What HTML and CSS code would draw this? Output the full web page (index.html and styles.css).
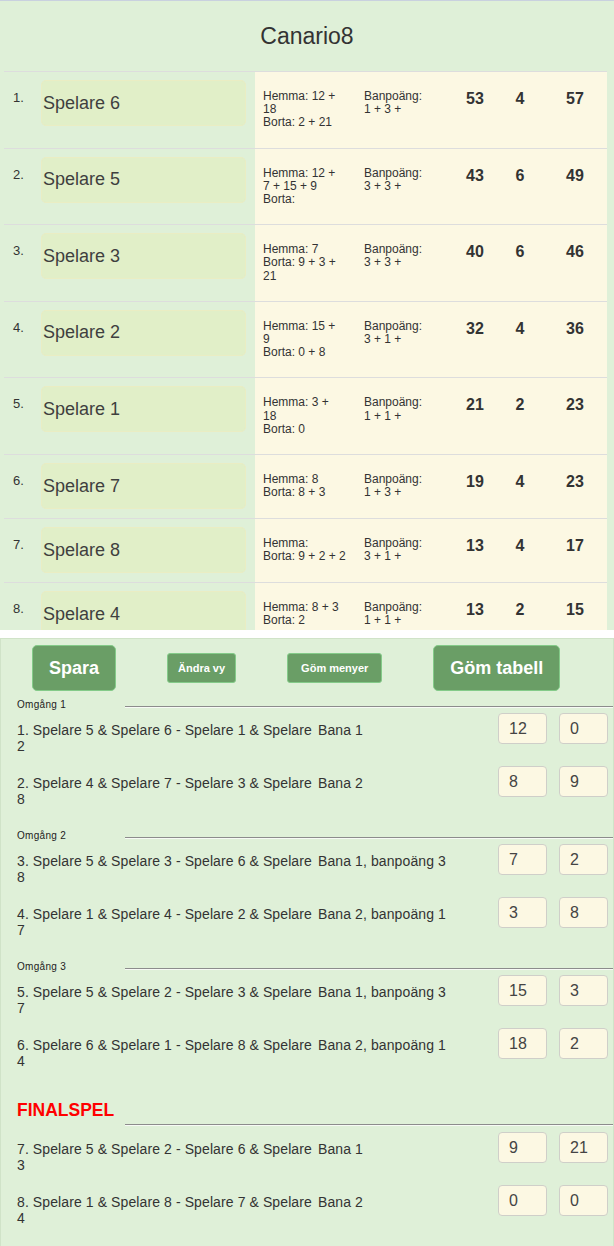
FILE: index.html
```html
<!DOCTYPE html>
<html lang="sv">
<head>
<meta charset="utf-8">
<title>Canario8</title>
<link rel="stylesheet" href="styles.css">
</head>
<body>
<div class="board">
  <h1 class="title">Canario8</h1>
  <div class="standings">
    <div class="row">
      <div class="pos">1.</div>
      <div class="name-cell"><div class="name">Spelare 6</div></div>
      <div class="cell hemma">Hemma: 12 +<br>18<br>Borta: 2 + 21</div>
      <div class="cell ban">Banpoäng:<br>1 + 3 +</div>
      <div class="cell score">53</div>
      <div class="cell score">4</div>
      <div class="cell score total">57</div>
    </div>
    <div class="row">
      <div class="pos">2.</div>
      <div class="name-cell"><div class="name">Spelare 5</div></div>
      <div class="cell hemma">Hemma: 12 +<br>7 + 15 + 9<br>Borta:</div>
      <div class="cell ban">Banpoäng:<br>3 + 3 +</div>
      <div class="cell score">43</div>
      <div class="cell score">6</div>
      <div class="cell score total">49</div>
    </div>
    <div class="row">
      <div class="pos">3.</div>
      <div class="name-cell"><div class="name">Spelare 3</div></div>
      <div class="cell hemma">Hemma: 7<br>Borta: 9 + 3 +<br>21</div>
      <div class="cell ban">Banpoäng:<br>3 + 3 +</div>
      <div class="cell score">40</div>
      <div class="cell score">6</div>
      <div class="cell score total">46</div>
    </div>
    <div class="row">
      <div class="pos">4.</div>
      <div class="name-cell"><div class="name">Spelare 2</div></div>
      <div class="cell hemma">Hemma: 15 +<br>9<br>Borta: 0 + 8</div>
      <div class="cell ban">Banpoäng:<br>3 + 1 +</div>
      <div class="cell score">32</div>
      <div class="cell score">4</div>
      <div class="cell score total">36</div>
    </div>
    <div class="row">
      <div class="pos">5.</div>
      <div class="name-cell"><div class="name">Spelare 1</div></div>
      <div class="cell hemma">Hemma: 3 +<br>18<br>Borta: 0</div>
      <div class="cell ban">Banpoäng:<br>1 + 1 +</div>
      <div class="cell score">21</div>
      <div class="cell score">2</div>
      <div class="cell score total">23</div>
    </div>
    <div class="row">
      <div class="pos">6.</div>
      <div class="name-cell"><div class="name">Spelare 7</div></div>
      <div class="cell hemma">Hemma: 8<br>Borta: 8 + 3</div>
      <div class="cell ban">Banpoäng:<br>1 + 3 +</div>
      <div class="cell score">19</div>
      <div class="cell score">4</div>
      <div class="cell score total">23</div>
    </div>
    <div class="row">
      <div class="pos">7.</div>
      <div class="name-cell"><div class="name">Spelare 8</div></div>
      <div class="cell hemma">Hemma:<br>Borta: 9 + 2 + 2</div>
      <div class="cell ban">Banpoäng:<br>3 + 1 +</div>
      <div class="cell score">13</div>
      <div class="cell score">4</div>
      <div class="cell score total">17</div>
    </div>
    <div class="row">
      <div class="pos">8.</div>
      <div class="name-cell"><div class="name">Spelare 4</div></div>
      <div class="cell hemma">Hemma: 8 + 3<br>Borta: 2</div>
      <div class="cell ban">Banpoäng:<br>1 + 1 +</div>
      <div class="cell score">13</div>
      <div class="cell score">2</div>
      <div class="cell score total">15</div>
    </div>
  </div>
</div>

<div class="panel">
  <div class="toolbar">
    <button class="btn btn-lg">Spara</button>
    <button class="btn btn-sm">Ändra vy</button>
    <button class="btn btn-sm btn-wide">Göm menyer</button>
    <button class="btn btn-lg">Göm tabell</button>
  </div>

  <section class="round">
    <div class="round-head"><span class="round-label">Omgång 1</span><span class="rule"></span></div>
    <div class="match">
      <div class="match-text">1. Spelare 5 &amp; Spelare 6 - Spelare 1 &amp; Spelare 2</div>
      <div class="match-lane">Bana 1</div>
      <input class="score-input" type="text" value="12">
      <input class="score-input" type="text" value="0">
    </div>
    <div class="match">
      <div class="match-text">2. Spelare 4 &amp; Spelare 7 - Spelare 3 &amp; Spelare 8</div>
      <div class="match-lane">Bana 2</div>
      <input class="score-input" type="text" value="8">
      <input class="score-input" type="text" value="9">
    </div>
  </section>

  <section class="round">
    <div class="round-head"><span class="round-label">Omgång 2</span><span class="rule"></span></div>
    <div class="match">
      <div class="match-text">3. Spelare 5 &amp; Spelare 3 - Spelare 6 &amp; Spelare 8</div>
      <div class="match-lane">Bana 1, banpoäng 3</div>
      <input class="score-input" type="text" value="7">
      <input class="score-input" type="text" value="2">
    </div>
    <div class="match">
      <div class="match-text">4. Spelare 1 &amp; Spelare 4 - Spelare 2 &amp; Spelare 7</div>
      <div class="match-lane">Bana 2, banpoäng 1</div>
      <input class="score-input" type="text" value="3">
      <input class="score-input" type="text" value="8">
    </div>
  </section>

  <section class="round">
    <div class="round-head"><span class="round-label">Omgång 3</span><span class="rule"></span></div>
    <div class="match">
      <div class="match-text">5. Spelare 5 &amp; Spelare 2 - Spelare 3 &amp; Spelare 7</div>
      <div class="match-lane">Bana 1, banpoäng 3</div>
      <input class="score-input" type="text" value="15">
      <input class="score-input" type="text" value="3">
    </div>
    <div class="match">
      <div class="match-text">6. Spelare 6 &amp; Spelare 1 - Spelare 8 &amp; Spelare 4</div>
      <div class="match-lane">Bana 2, banpoäng 1</div>
      <input class="score-input" type="text" value="18">
      <input class="score-input" type="text" value="2">
    </div>
  </section>

  <section class="round final">
    <div class="round-head"><span class="round-label final-label">FINALSPEL</span><span class="rule final-rule"></span></div>
    <div class="match">
      <div class="match-text">7. Spelare 5 &amp; Spelare 2 - Spelare 6 &amp; Spelare 3</div>
      <div class="match-lane">Bana 1</div>
      <input class="score-input" type="text" value="9">
      <input class="score-input" type="text" value="21">
    </div>
    <div class="match">
      <div class="match-text">8. Spelare 1 &amp; Spelare 8 - Spelare 7 &amp; Spelare 4</div>
      <div class="match-lane">Bana 2</div>
      <input class="score-input" type="text" value="0">
      <input class="score-input" type="text" value="0">
    </div>
  </section>
</div>
</body>
</html>
```

FILE: styles.css
```css
* {
  box-sizing: border-box;
}

html,
body {
  margin: 0;
  padding: 0;
}

body {
  width: 614px;
  background: #ffffff;
  font-family: "Liberation Sans", Arial, sans-serif;
  color: #333333;
}

/* ---------- standings board ---------- */
.board {
  height: 630px;
  overflow: hidden;
  background: #dff0d8;
  border-top: 1px solid #c9d1df;
}

.title {
  margin: 0;
  height: 70px;
  line-height: 70px;
  text-align: center;
  font-size: 23px;
  font-weight: normal;
  color: #333333;
}

.standings {
  margin: 0 7px 0 4px;
}

.row {
  display: grid;
  grid-template-columns: 37px 214px 101px 89px 60px 30px 72px;
  border-top: 1px solid #dddddd;
}

.pos {
  padding: 18px 0 0 9px;
  font-size: 13px;
  color: #333333;
}

.name-cell {
  padding: 8px 9px 9px 0;
}

.name {
  height: 46px;
  display: flex;
  align-items: center;
  padding-left: 1px;
  background: #e1efc8;
  border: 1px solid #eaedc3;
  border-radius: 5px;
  font-size: 18px;
  color: #3f3f3f;
}

.cell {
  background: #fcf8e3;
  padding-top: 18px;
  padding-bottom: 18px;
}

.hemma,
.ban {
  padding-left: 8px;
  font-size: 12px;
  line-height: 13.2px;
  color: #333333;
}

.score {
  font-size: 16px;
  font-weight: bold;
  text-align: center;
  color: #333333;
}

.total {
  padding-left: 8px;
}

/* ---------- bottom panel ---------- */
.panel {
  margin-top: 8px;
  background: #dff0d8;
  border: 1px solid #d0e3c8;
  padding: 6px 4px 20px 16px;
}

.toolbar {
  display: flex;
  align-items: center;
  gap: 51px;
  margin: 0 0 8px 15px;
}

.btn {
  font-family: "Liberation Sans", Arial, sans-serif;
  font-weight: bold;
  color: #ffffff;
  background: #6a9e66;
  border: 1px solid #84cb89;
  cursor: pointer;
}

.btn-lg {
  height: 46px;
  padding: 0 16px;
  font-size: 18px;
  border-radius: 5px;
}

.btn-sm {
  height: 30px;
  padding: 0 10px;
  font-size: 11px;
  border-radius: 3px;
}

.btn-wide {
  padding: 0 13px;
}

.round + .round {
  margin-top: 11px;
}

.round.final {
  margin-top: 19px;
}

.round-head {
  display: flex;
  align-items: flex-end;
}

.round-label {
  width: 108px;
  flex: none;
  font-size: 10px;
  line-height: 12px;
  padding-bottom: 2px;
  letter-spacing: 0.3px;
  color: #222222;
}

.final-label {
  font-size: 17.5px;
  line-height: 20px;
  font-weight: bold;
  letter-spacing: 0;
  padding-bottom: 12px;
  color: #ff0000;
}

.rule {
  flex: 1;
  height: 2px;
  margin: 0 -4px 5px 0;
  border-top: 1px solid #8c8c8c;
  border-bottom: 1px solid #f7faf5;
}

.final-rule {
  margin-bottom: 6px;
}

.match {
  display: flex;
  align-items: flex-start;
  height: 53px;
}

.match-text {
  width: 296px;
  margin-right: 5px;
  padding-top: 9px;
  font-size: 14px;
  line-height: 16px;
  letter-spacing: 0.1px;
  color: #333333;
}

.match-lane {
  width: 180px;
  padding-top: 9px;
  font-size: 14px;
  line-height: 16px;
  letter-spacing: 0.1px;
  color: #333333;
}

.score-input {
  width: 49px;
  height: 31px;
  margin: 0;
  padding: 0 10px;
  background: #fcf8e3;
  border: 1px solid #cfcfc9;
  border-radius: 4px;
  font-family: "Liberation Sans", Arial, sans-serif;
  font-size: 16px;
  color: #444444;
}

.score-input + .score-input {
  margin-left: 12px;
}
```
